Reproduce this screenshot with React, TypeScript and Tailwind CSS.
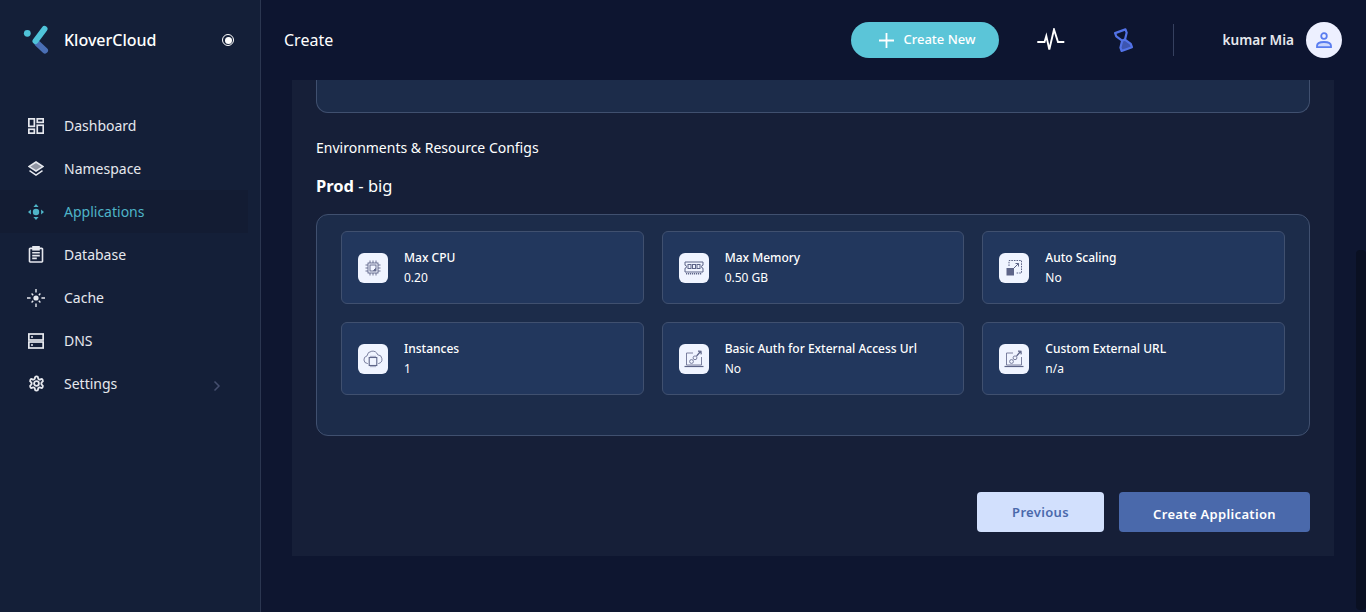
import { ReactNode } from "react";

const Dashboard = () => (
  <svg width="16" height="16" viewBox="0 0 16 16" fill="none" stroke="currentColor" strokeWidth="1.7">
    <rect x="0.85" y="0.85" width="5.5" height="7.5" />
    <rect x="9.25" y="0.85" width="6" height="3.5" />
    <rect x="0.85" y="11.25" width="5.5" height="3.9" />
    <rect x="9.25" y="7.25" width="6" height="7.9" />
  </svg>
);

const Layers = () => (
  <svg width="16" height="16" viewBox="0 0 16 16" fill="none" stroke="currentColor" strokeWidth="1.5">
    <path d="M8 1 15 5.6 8 10 1 5.6Z" fill="currentColor" fillOpacity="0.6" />
    <path d="M1.5 9.6 8 14l6.5-4.4" />
  </svg>
);

const Apps = () => (
  <svg width="16" height="16" viewBox="0 0 16 16" fill="currentColor">
    <circle cx="8" cy="8" r="3.2" />
    <path d="M8 0 10.6 2.9H5.4ZM8 16 5.4 13.1h5.2ZM0 8l2.9-2.6v5.2ZM16 8l-2.9 2.6V5.4Z" />
  </svg>
);

const Clipboard = () => (
  <svg width="16" height="17" viewBox="0 0 16 17" fill="none" stroke="currentColor" strokeWidth="1.6">
    <path d="M5 2.4H2.2a.7.7 0 0 0-.7.7v12.2a.7.7 0 0 0 .7.7h11.6a.7.7 0 0 0 .7-.7V3.1a.7.7 0 0 0-.7-.7H11" />
    <rect x="5" y="0.8" width="6" height="3" fill="currentColor" />
    <path d="M4.2 6.8h7.6M4.2 9.6h7.6M4.2 12.4h4.6" />
  </svg>
);

const Cache = () => (
  <svg width="18" height="18" viewBox="0 0 18 18" fill="none" stroke="currentColor" strokeWidth="1.4">
    <circle cx="9" cy="9" r="2.6" fill="currentColor" stroke="none" />
    <path d="M9 0v3.6M9 14.4V18M0 9h3.6M14.4 9H18M4.6 4.6l1.6 1.6M11.8 11.8l1.6 1.6M13.4 4.6l-1.6 1.6M6.2 11.8l-1.6 1.6" />
  </svg>
);

const Server = () => (
  <svg width="16" height="16" viewBox="0 0 16 16" fill="none" stroke="currentColor" strokeWidth="1.7">
    <rect x="0.85" y="1" width="14.3" height="6" />
    <rect x="0.85" y="9" width="14.3" height="6" />
    <path d="M3 4h2M3 12h2" />
  </svg>
);

const Gear = () => (
  <svg width="17" height="17" viewBox="0 0 24 24" fill="none" stroke="currentColor" strokeWidth="2.6" strokeLinejoin="round">
    <path d="M12.22 2h-.44a2 2 0 0 0-2 2v.18a2 2 0 0 1-1 1.73l-.43.25a2 2 0 0 1-2 0l-.15-.08a2 2 0 0 0-2.73.73l-.22.38a2 2 0 0 0 .73 2.73l.15.1a2 2 0 0 1 1 1.72v.51a2 2 0 0 1-1 1.74l-.15.09a2 2 0 0 0-.73 2.73l.22.38a2 2 0 0 0 2.73.73l.15-.08a2 2 0 0 1 2 0l.43.25a2 2 0 0 1 1 1.73V20a2 2 0 0 0 2 2h.44a2 2 0 0 0 2-2v-.18a2 2 0 0 1 1-1.73l.43-.25a2 2 0 0 1 2 0l.15.08a2 2 0 0 0 2.73-.73l.22-.39a2 2 0 0 0-.73-2.73l-.15-.08a2 2 0 0 1-1-1.74v-.5a2 2 0 0 1 1-1.74l.15-.09a2 2 0 0 0 .73-2.73l-.22-.38a2 2 0 0 0-2.73-.73l-.15.08a2 2 0 0 1-2 0l-.43-.25a2 2 0 0 1-1-1.73V4a2 2 0 0 0-2-2z" />
    <circle cx="12" cy="12" r="3.4" />
  </svg>
);

const CpuIcon = () => (
  <svg width="16" height="16" viewBox="0 0 16 16" fill="none" stroke="#5d6488" strokeWidth="0.9">
    <rect x="3" y="3" width="10" height="10" />
    <rect x="5" y="5" width="6" height="6" />
    <path d="M8.5 10.5 10.5 8.5V10.5Z" fill="#5d6488" />
    <path d="M5 0.5V3M8 0.5V3M11 0.5V3M5 13v2.5M8 13v2.5M11 13v2.5M0.5 5H3M0.5 8H3M0.5 11H3M13 5h2.5M13 8h2.5M13 11h2.5" />
  </svg>
);

const MemoryIcon = () => (
  <svg width="20" height="14" viewBox="0 0 20 14" fill="none" stroke="#5d6488" strokeWidth="1">
    <path d="M1 1h18v3.2a1.5 1.5 0 0 0 0 3V11H1V7.2a1.5 1.5 0 0 0 0-3Z" />
    <rect x="4" y="3.5" width="3" height="4" />
    <rect x="8.5" y="3.5" width="3" height="4" />
    <rect x="13" y="3.5" width="3" height="4" />
    <path d="M2 12.8h16" strokeDasharray="1.2 0.8" strokeWidth="1.6" />
  </svg>
);

const ScaleIcon = () => (
  <svg width="16" height="16" viewBox="0 0 16 16" fill="none" stroke="#5d6488" strokeWidth="1">
    <rect x="0.5" y="8" width="7.5" height="7.5" fill="#5d6488" stroke="none" />
    <path d="M3 6V0.5h12.5V13H10" strokeDasharray="1.6 1" />
    <path d="M7.5 8.5 12.5 3.5M9.5 3.5h3v3" />
  </svg>
);

const CloudChipIcon = () => (
  <svg width="20" height="18" viewBox="0 0 20 18" fill="none" stroke="#6d7394" strokeWidth="0.9">
    <path d="M5 13.5H4.5a3.8 3.8 0 0 1-.6-7.5 5.6 5.6 0 0 1 10.8-1.2A4.4 4.4 0 0 1 15.5 13.5H15" />
    <rect x="6.2" y="7.5" width="7.6" height="8" stroke="#5d6488" strokeWidth="1.1" />
    <path d="M8 5.8v1.7M10 5.8v1.7M12 5.8v1.7M8 15.5v1.7M10 15.5v1.7M12 15.5v1.7" />
  </svg>
);

const LinkIcon = () => (
  <svg width="20" height="18" viewBox="0 0 20 18" fill="none" stroke="#6d7394" strokeWidth="0.9">
    <path d="M9 3H2.5v12h15V7" />
    <path d="M0.5 16.5h19" stroke="#5d6488" strokeWidth="1.2" />
    <circle cx="7.5" cy="11.5" r="1.9" />
    <circle cx="11" cy="7.8" r="1.9" />
    <path d="M12.6 6 16.5 1.5M14 1.2l3 .2.2 3" stroke="#5d6488" strokeWidth="1.2" />
  </svg>
);

const navItems: { label: string; icon: ReactNode; active?: boolean; arrow?: boolean }[] = [
  { label: "Dashboard", icon: <Dashboard /> },
  { label: "Namespace", icon: <Layers /> },
  { label: "Applications", icon: <Apps />, active: true },
  { label: "Database", icon: <Clipboard /> },
  { label: "Cache", icon: <Cache /> },
  { label: "DNS", icon: <Server /> },
  { label: "Settings", icon: <Gear />, arrow: true },
];

const configs: { title: string; value: string; icon: ReactNode }[] = [
  { title: "Max CPU", value: "0.20", icon: <CpuIcon /> },
  { title: "Max Memory", value: "0.50 GB", icon: <MemoryIcon /> },
  { title: "Auto Scaling", value: "No", icon: <ScaleIcon /> },
  { title: "Instances", value: "1", icon: <CloudChipIcon /> },
  { title: "Basic Auth for External Access Url", value: "No", icon: <LinkIcon /> },
  { title: "Custom External URL", value: "n/a", icon: <LinkIcon /> },
];

const Sidebar = () => (
  <aside className="w-[261px] shrink-0 h-full bg-[#141f38] border-r border-[#2b3650]">
    <div className="h-20 flex items-center pl-[20px] pr-[26px]">
      <svg width="30" height="32" viewBox="20 24 30 32" fill="none" strokeLinecap="round">
        <circle cx="27.3" cy="33.3" r="3.4" fill="#4fc3d9" />
        <path d="M37.5 43.5 45 50.5" stroke="#4a6fb5" strokeWidth="6" />
        <path d="M44.5 29 35.5 41" stroke="#4fc3d9" strokeWidth="6" />
      </svg>
      <span className="ml-[14px] text-base font-medium text-white">KloverCloud</span>
      <span className="ml-auto w-3 h-3 rounded-full border border-white flex items-center justify-center">
        <span className="w-[7px] h-[7px] rounded-full bg-white" />
      </span>
    </div>
    <nav className="mt-[24px] pr-3">
      {navItems.map((item) => (
        <div
          key={item.label}
          className={`h-[43px] flex items-center pl-[27px] pr-[27px] text-sm ${
            item.active ? "bg-[#131c33] text-[#4eb4c8]" : "text-[#e6e8ee]"
          }`}
        >
          <span className="w-[18px] flex justify-center">{item.icon}</span>
          <span className="ml-[19px]">{item.label}</span>
          {item.arrow && (
            <svg className="ml-auto mt-1" width="8" height="12" viewBox="0 0 8 12" fill="none" stroke="#454e6e" strokeWidth="1.5">
              <path d="M1.5 1.5 6 6l-4.5 4.5" />
            </svg>
          )}
        </div>
      ))}
    </nav>
  </aside>
);

const Header = () => (
  <header className="h-20 shrink-0 flex items-center pl-[23px] pr-[24px] bg-[#0d1530]">
    <span className="text-base text-white">Create</span>
    <button className="ml-auto w-[148px] h-9 pl-1 rounded-full bg-[#5bc5d8] flex items-center justify-center gap-[9px] text-[13px] font-medium text-white">
      <svg width="15" height="15" viewBox="0 0 15 15" stroke="white" strokeWidth="1.8">
        <path d="M7.5 0v15M0 7.5h15" />
      </svg>
      Create New
    </button>
    <svg className="ml-[38px]" width="28" height="24" viewBox="1037 29 28 24" fill="none" stroke="white" strokeWidth="1.9">
      <path d="M1037.3 43H1044.5L1046.3 37 1049.3 50.5 1054 30.5 1058 43H1064.3" />
    </svg>
    <svg className="ml-[49px]" width="20" height="24" viewBox="0 0 20 24" fill="none">
      <g transform="rotate(-20 10 12)" stroke="#5272e6" strokeWidth="2.2" strokeLinejoin="round">
        <path d="M4 2.5h11v3.5L11 12H8L4 6Z" />
        <path d="M8 12h3l4 6v3.5H4V18Z" fill="#3d55b0" />
      </g>
    </svg>
    <span className="ml-[39px] w-px h-8 bg-[#35405f]" />
    <span className="ml-[48px] text-[13.6px] font-semibold text-[#e6e8ee]">kumar Mia</span>
    <span className="ml-3 w-9 h-9 rounded-full bg-[#edf0ff] flex items-center justify-center">
      <svg width="18" height="18" viewBox="0 0 18 18" fill="none" stroke="#5a7df0" strokeWidth="1.8">
        <circle cx="9" cy="5" r="2.8" />
        <path d="M2 16.2v-1.4C2 12.4 5 11 9 11s7 1.4 7 3.8v1.4Z" fill="#5a7df0" fillOpacity="0.2" />
      </svg>
    </span>
  </header>
);

const ConfigCard = ({ title, value, icon }: { title: string; value: string; icon: ReactNode }) => (
  <div className="h-[73px] flex items-center pl-[16px] bg-[#22375d] border border-[#40506f] rounded-md">
    <div className="w-[30px] h-[30px] rounded-md bg-[#f0f4ff] flex items-center justify-center shrink-0">{icon}</div>
    <div className="ml-[16px] text-xs leading-5 text-white">
      <div className="font-medium">{title}</div>
      <div>{value}</div>
    </div>
  </div>
);

export default function App() {
  return (
    <div className="flex w-full h-[612px] overflow-hidden bg-[#0e1630] font-['Noto_Sans','Open_Sans',sans-serif]">
      <Sidebar />
      <div className="flex-1 min-w-0 flex flex-col">
        <Header />
        <div className="flex-1 flex min-h-0">
          <main className="flex-1 pl-[31px] pr-[22px]">
            <section className="h-[476px] bg-[#161f38] px-6">
              <div className="h-[33px] bg-[#1c2c4a] border border-t-0 border-[#40506f] rounded-b-xl" />
              <h2 className="mt-[25px] text-sm leading-5 text-white">Environments &amp; Resource Configs</h2>
              <p className="mt-[18px] text-[16.5px] leading-5 text-white">
                <strong className="font-bold">Prod</strong> - big
              </p>
              <div className="mt-[18px] h-[222px] bg-[#1c2c4a] border border-[#40506f] rounded-xl px-6 pt-4">
                <div className="grid grid-cols-3 gap-[18px]">
                  {configs.map((c) => (
                    <ConfigCard key={c.title} {...c} />
                  ))}
                </div>
              </div>
              <div className="mt-14 flex justify-end gap-[15px]">
                <button className="w-[127px] h-10 pt-px rounded bg-[#d2e0fd] text-[13px] font-semibold tracking-wide text-[#4a69ab]">
                  Previous
                </button>
                <button className="w-[191px] h-10 pt-[5px] rounded bg-[#4a69ab] text-[13px] font-semibold tracking-wide text-white">
                  Create Application
                </button>
              </div>
            </section>
          </main>
          <div className="w-[10px] shrink-0 pt-[170px]">
            <div className="h-[360px] rounded bg-[#0a1022]" />
          </div>
        </div>
      </div>
    </div>
  );
}
